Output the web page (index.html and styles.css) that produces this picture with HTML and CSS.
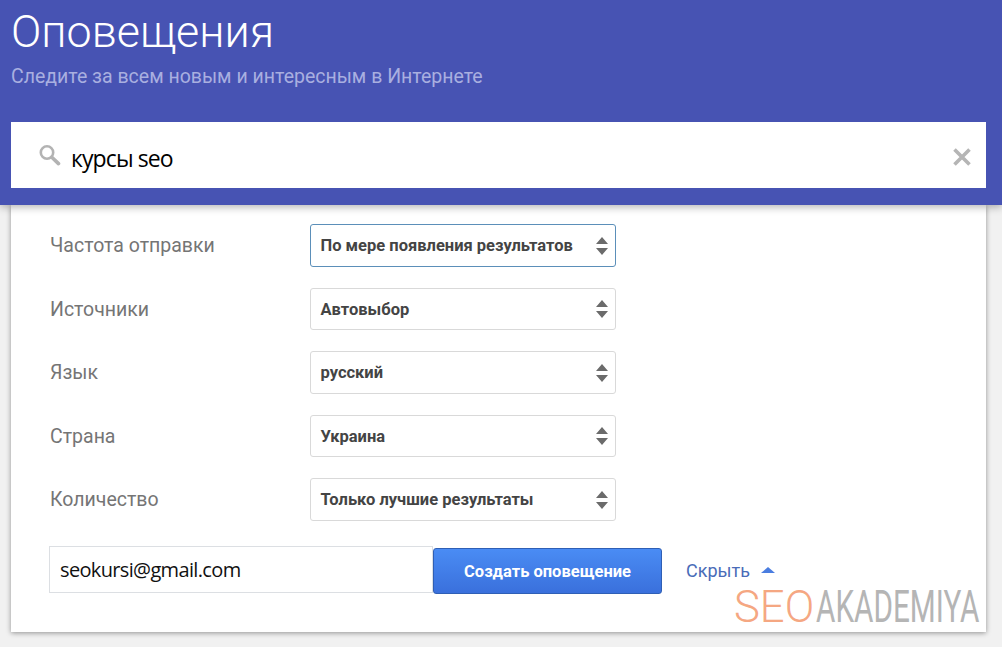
FILE: index.html
```html
<!DOCTYPE html>
<html lang="ru">
<head>
<meta charset="utf-8">
<title>Оповещения</title>
<link rel="stylesheet" href="styles.css">
</head>
<body>
<header class="hero">
  <h1 class="title">Оповещения</h1>
  <p class="subtitle">Следите за всем новым и интересным в Интернете</p>
  <div class="search">
    <svg class="search-icon" width="24" height="24" viewBox="0 0 24 24"><circle cx="10" cy="9.5" r="6.2" fill="none" stroke="#b3b3b3" stroke-width="2.6"/><path d="M14.8 14.2 21.5 20.6" stroke="#b3b3b3" stroke-width="3.6" stroke-linecap="round"/></svg>
    <span class="query">курсы seo</span>
    <svg class="close-icon" width="20" height="20" viewBox="0 0 20 20"><path d="M2.5 2.5 17.5 17.5M17.5 2.5 2.5 17.5" stroke="#b5b5b5" stroke-width="3.6"/></svg>
  </div>
</header>
<main class="card">
  <div class="row">
    <span class="label">Частота отправки</span>
    <div class="select focused"><span>По мере появления результатов</span><svg class="updown" width="14" height="20" viewBox="0 0 14 20"><path d="M7 1 13 8H1ZM1 12H13L7 19Z" fill="#6b6b6b"/></svg></div>
  </div>
  <div class="row">
    <span class="label">Источники</span>
    <div class="select"><span>Автовыбор</span><svg class="updown" width="14" height="20" viewBox="0 0 14 20"><path d="M7 1 13 8H1ZM1 12H13L7 19Z" fill="#6b6b6b"/></svg></div>
  </div>
  <div class="row">
    <span class="label">Язык</span>
    <div class="select"><span>русский</span><svg class="updown" width="14" height="20" viewBox="0 0 14 20"><path d="M7 1 13 8H1ZM1 12H13L7 19Z" fill="#6b6b6b"/></svg></div>
  </div>
  <div class="row">
    <span class="label">Страна</span>
    <div class="select"><span>Украина</span><svg class="updown" width="14" height="20" viewBox="0 0 14 20"><path d="M7 1 13 8H1ZM1 12H13L7 19Z" fill="#6b6b6b"/></svg></div>
  </div>
  <div class="row">
    <span class="label">Количество</span>
    <div class="select"><span>Только лучшие результаты</span><svg class="updown" width="14" height="20" viewBox="0 0 14 20"><path d="M7 1 13 8H1ZM1 12H13L7 19Z" fill="#6b6b6b"/></svg></div>
  </div>
  <div class="actions">
    <div class="email">seokursi@gmail.com</div>
    <button class="create" type="button">Создать оповещение</button>
    <span class="hide">Скрыть</span>
    <svg class="caret" width="14" height="6" viewBox="0 0 14 6"><path d="M7 0 14 6H0Z" fill="#4a7de0"/></svg>
  </div>
  <div class="watermark"><span class="wm-seo">SEO</span><span class="wm-rest">AKADEMIYA</span></div>
</main>
</body>
</html>
```

FILE: styles.css
```css
* { box-sizing: border-box; }
html, body { margin: 0; height: 647px; overflow: hidden; }
body { background: #f1f1f1; font-family: Roboto, "Liberation Sans", sans-serif; position: relative; }

.hero {
  height: 205px;
  background: #4753b3;
  padding: 6px 16px 0 11px;
  position: relative;
  z-index: 2;
  box-shadow: 0 2px 8px rgba(0,0,0,.3);
}
.title {
  margin: 0;
  font-weight: 300;
  font-size: 44.8px;
  line-height: 52px;
  color: #fff;
}
.subtitle {
  margin: 8px 0 0 0;
  font-size: 19.5px;
  line-height: 22px;
  color: #a9afe0;
}
.search {
  margin-top: 34px;
  height: 66px;
  background: #fff;
  display: flex;
  align-items: center;
  padding: 0 14px 0 26px;
}
.search-icon { margin-top: 0; flex: none; }
.query {
  margin-left: 10px;
  font-family: "Open Sans", sans-serif;
  font-size: 23px;
  letter-spacing: -.9px;
  color: #000;
  flex: 1;
  padding-top: 5px;
}
.close-icon { margin-top: 4px; flex: none; }

.card {
  position: relative;
  margin: 0 16px 0 11px;
  height: 427px;
  background: #fff;
  box-shadow: 0 1px 5px rgba(0,0,0,.4);
  padding: 19px 0 0 39px;
}
.row { display: flex; align-items: center; height: 43px; margin-bottom: 20.5px; }
.label { width: 260px; font-size: 19.5px; color: #757575; }
.select {
  width: 306px;
  height: 42.5px;
  border: 1px solid #d9d9d9;
  border-radius: 3px;
  display: flex;
  align-items: center;
  justify-content: space-between;
  padding: 0 6px 0 9.5px;
  font-size: 16.5px;
  font-weight: 700;
  color: #444;
}
.select.focused { border-color: #5b8fb9; }

.actions { display: flex; align-items: center; margin-top: 25.5px; height: 48px; }
.email {
  width: 384px;
  height: 47px;
  margin-top: -2px;
  border: 1px solid #dcdfe3;
  padding-left: 10px;
  font-family: "Open Sans", sans-serif;
  font-size: 20px;
  letter-spacing: -.65px;
  line-height: 45px;
  color: #111;
  margin-left: -1px;
}
.create {
  width: 229px;
  height: 46px;
  margin-top: 1px;
  border: 1px solid #2f5fb5;
  border-radius: 3px;
  background: linear-gradient(#4a8cf4, #3a70dc);
  color: #fff;
  font-family: Roboto, sans-serif;
  font-size: 16.5px;
  font-weight: 700;
  padding: 0;
}
.hide { margin-left: 24px; font-size: 18px; color: #4a6cb8; }
.caret { margin-left: 11px; margin-top: -2px; }

.watermark {
  position: absolute;
  left: 723px;
  top: 375px;
  width: 246px;
  display: flex;
  font-size: 44.5px;
  line-height: 54px;
  white-space: nowrap;
}
.wm-seo {
  flex: none;
  width: 82px;
  font-weight: 300;
  color: #f5a782;
  transform: scaleX(.98);
  transform-origin: left top;
}
.wm-rest {
  flex: none;
  font-weight: 400;
  color: #b5b5b5;
  transform: scaleX(.668);
  transform-origin: left top;
}
```
